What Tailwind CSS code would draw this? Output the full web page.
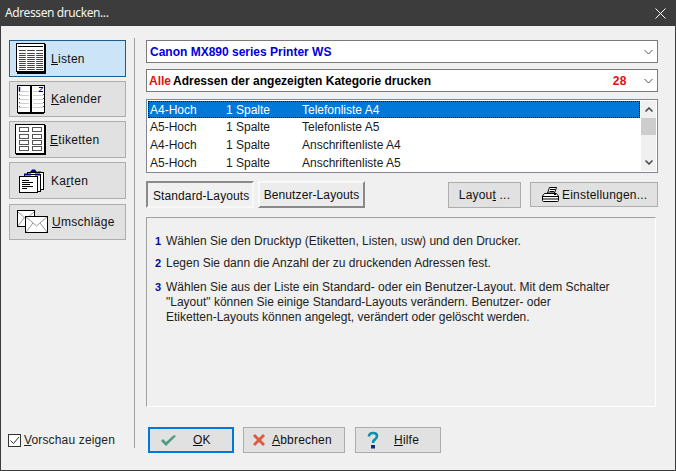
<!DOCTYPE html>
<html lang="de">
<head>
  <meta charset="UTF-8" />
  <title>Adressen drucken...</title>
  <script src="https://cdn.jsdelivr.net/npm/@tailwindcss/browser@4"></script>
</head>
<body class="w-[676px] h-[471px] overflow-hidden bg-[#f0f0f0] font-['Liberation_Sans',sans-serif] text-[12px] text-[#111]">
  <div class="w-[676px] h-[471px] flex flex-col border border-[#3c3c3c] border-t-0">
    <!-- title bar -->
    <div class="h-[26px] -mx-px bg-[#3c3c3c] text-[#f4f4f4] flex items-center justify-between pl-[5px] pr-[10px] font-['Noto_Sans',sans-serif] text-[12px] tracking-[-0.4px] shrink-0">
      <span>Adressen drucken...</span>
      <svg width="11" height="11" viewBox="0 0 11 11" fill="none" stroke="#fff" stroke-width="1"><path d="M0.5 0.5L10.5 10.5M10.5 0.5L0.5 10.5"/></svg>
    </div>

    <div class="flex flex-1 min-h-0">
      <!-- left column -->
      <div class="w-[133px] pl-[8px] pt-[14px] pb-[22px] flex flex-col shrink-0">
        <div class="flex flex-col text-[12px] tracking-[0.3px]">
          <button class="w-[117px] h-[37px] flex items-center border border-[#1b5e92] bg-[#cce4f7]">
            <svg class="ml-[6px] mr-[5px]" width="30" height="31" viewBox="0 0 30 31">
              <rect x="0.5" y="0.5" width="28" height="28" fill="#fff" stroke="#000"/>
              <rect x="1" y="29" width="29" height="2" fill="#000"/>
              <rect x="29" y="1" width="1" height="30" fill="#000"/>
              <path d="M2 3.500H27" stroke="#000"/>
              <path d="M3 7.500H27M3 10.500H27M3 12.500H27M3 14.500H27M3 16.500H27M3 18.500H27M3 20.500H27M3 22.500H27M3 24.500H27M3 26.500H27" stroke="#444"/>
              <path d="M10.500 7V27M19.500 7V27" stroke="#fff" stroke-width="1.400"/>
            </svg>
            <span><u>L</u>isten</span>
          </button>
          <button class="mt-[4px] w-[117px] h-[36px] flex items-center border border-[#adadad] bg-[#e1e1e1]">
            <svg class="ml-[6px] mr-[5px]" width="30" height="29" viewBox="0 0 30 29">
              <rect x="1.500" y="0.500" width="13" height="27" fill="#fff" stroke="#000"/>
              <rect x="15.500" y="0.500" width="13" height="27" fill="#fff" stroke="#000"/>
              <path d="M3 6.500H13M17 6.500H27M3 10.500H13M17 10.500H27M3 14.500H13M17 14.500H27M3 18.500H13M17 18.500H27M3 22.500H13M17 22.500H27" stroke="#cfcfcf"/>
              <path d="M3.500 9V24M27.500 9V24" stroke="#b0303a" stroke-dasharray="1 3"/>
              <path d="M3.500 2V6.500" stroke="#00008b" stroke-width="1.400"/>
              <path d="M23 2.500H27L23 6.500H27" stroke="#00008b" fill="none"/>
              <path d="M15 1V28" stroke="#000" stroke-width="2" stroke-dasharray="2 1"/>
              <path d="M2 28.500H28" stroke="#000"/>
            </svg>
            <span><u>K</u>alender</span>
          </button>
          <button class="mt-[4px] w-[117px] h-[37px] flex items-center border border-[#adadad] bg-[#e1e1e1]">
            <svg class="ml-[5px] mr-[4px]" width="31" height="31" viewBox="0 0 31 31">
              <rect x="0.500" y="0.500" width="29" height="29" fill="#fff" stroke="#000"/>
              <rect x="1" y="30" width="30" height="1" fill="#000"/>
              <path d="M30.500 1V31" stroke="#000"/>
              <g fill="#fff" stroke="#555"><rect x="4.500" y="3.500" width="9" height="4"/><rect x="17.500" y="3.500" width="9" height="4"/><rect x="4.500" y="10.500" width="9" height="4"/><rect x="17.500" y="10.500" width="9" height="4"/><rect x="4.500" y="16.500" width="9" height="4"/><rect x="17.500" y="16.500" width="9" height="4"/><rect x="4.500" y="22.500" width="9" height="4"/><rect x="17.500" y="22.500" width="9" height="4"/></g>
            </svg>
            <span><u>E</u>tiketten</span>
          </button>
          <button class="mt-[4px] w-[117px] h-[37px] flex items-center border border-[#adadad] bg-[#e1e1e1]">
            <svg class="ml-[9px] mr-[6px]" width="26" height="24" viewBox="0 0 26 24">
              <path d="M7 6L10 3H14L17 6ZM11 3L13 0.500H16L18 3ZM17 5L19 2.500H22L24 5Z" fill="#00007f"/>
              <rect x="8.500" y="3.500" width="16" height="17" fill="#fff" stroke="#000"/>
              <rect x="5.500" y="5.500" width="16" height="17" fill="#fff" stroke="#000"/>
              <path d="M5 5.500H12M16 5.500H21" stroke="#00007f" stroke-width="2"/>
              <rect x="0.500" y="7.500" width="18" height="16" fill="#fff" stroke="#000"/>
              <path d="M3 11.500H10M3 13.500H14M3 15.500H11M3 17.500H14M3 19.500H8" stroke="#000"/>
            </svg>
            <span>Ka<u>r</u>ten</span>
          </button>
          <button class="mt-[5px] w-[117px] h-[36px] flex items-center border border-[#adadad] bg-[#e1e1e1]">
            <svg class="ml-[6px] mr-[4px]" width="32" height="24" viewBox="0 0 32 24">
              <rect x="1.500" y="0.500" width="17" height="16" fill="#fff" stroke="#000"/>
              <path d="M2 2L10 9L18 2M2 16L8 8" fill="none" stroke="#999"/>
              <rect x="9.500" y="6.500" width="22" height="16" fill="#fff" stroke="#000"/>
              <path d="M10 7L20.500 16L31 7M10 22L17 13M31 22L24 13" fill="none" stroke="#999"/>
            </svg>
            <span><u>U</u>mschläge</span>
          </button>
        </div>
        <label class="mt-auto -ml-px flex items-center h-[16px] text-[12px] tracking-[0.15px] text-[#222]">
          <span class="w-[13px] h-[13px] mt-px border border-[#333] bg-white flex items-center justify-center shrink-0">
            <svg width="11" height="11" viewBox="0 0 11 11" fill="none" stroke="#333"><path d="M1.500 5.500L4.500 8.500L10 2"/></svg>
          </span>
          <span class="ml-[3px]"><u>V</u>orschau zeigen</span>
        </label>
      </div>

      <!-- divider -->
      <div class="w-px bg-[#a0a0a0] mt-[12px] mb-[22px] shrink-0"></div>

      <!-- right column -->
      <div class="w-[512px] ml-[11px] pt-[14px] flex flex-col">
        <div class="h-[23px] border border-[#7a7a7a] bg-white flex items-center justify-between pl-[3px] pr-[4px] font-bold text-[#0000d8] text-[12px]">
          <span>Canon MX890 series Printer WS</span>
          <svg width="9" height="6" viewBox="0 0 9 6" fill="none" stroke="#555"><path d="M0.500 1L4.500 5L8.500 1"/></svg>
        </div>
        <div class="mt-[6px] h-[23px] border border-[#7a7a7a] bg-white flex items-center pl-[2px] pr-[4px] font-bold text-[12px] text-black">
          <span class="text-[#e81010]">Alle</span>
          <span class="ml-[2px]">Adressen der angezeigten Kategorie drucken</span>
          <span class="ml-auto mr-[17px] text-[#e01010] text-[12px] tracking-[0.5px]">28</span>
          <svg width="9" height="6" viewBox="0 0 9 6" fill="none" stroke="#555"><path d="M0.500 1L4.500 5L8.500 1"/></svg>
        </div>

        <!-- list -->
        <div class="mt-[7px] h-[74px] border border-[#828790] bg-white p-px flex">
          <div class="flex-1 text-[#1a1a1a]">
            <div class="h-[17px] mb-px bg-[#0078d7] text-white outline-1 outline-dotted outline-offset-[-1px] outline-black flex items-center pl-[2px]">
              <span class="w-[76px]">A4-Hoch</span><span class="w-[76px]">1 Spalte</span><span>Telefonliste A4</span>
            </div>
            <div class="h-[18px] pb-[2px] flex items-center pl-[2px]">
              <span class="w-[76px]">A5-Hoch</span><span class="w-[76px]">1 Spalte</span><span>Telefonliste A5</span>
            </div>
            <div class="h-[18px] pb-[2px] flex items-center pl-[2px]">
              <span class="w-[76px]">A4-Hoch</span><span class="w-[76px]">1 Spalte</span><span>Anschriftenliste A4</span>
            </div>
            <div class="h-[18px] pb-[2px] flex items-center pl-[2px]">
              <span class="w-[76px]">A5-Hoch</span><span class="w-[76px]">1 Spalte</span><span>Anschriftenliste A5</span>
            </div>
          </div>
          <div class="w-[15px] ml-px bg-[#f0f0f0] flex flex-col">
            <div class="h-[17px] flex items-center justify-center"><svg width="8" height="5" viewBox="0 0 8 5" fill="none" stroke="#444" stroke-width="1.500"><path d="M0.500 4.500L4 1L7.500 4.500"/></svg></div>
            <div class="h-[17px] bg-[#cdcdcd]"></div>
            <div class="flex-1"></div>
            <div class="h-[17px] flex items-center justify-center"><svg width="8" height="5" viewBox="0 0 8 5" fill="none" stroke="#444" stroke-width="1.500"><path d="M0.500 0.500L4 4L7.500 0.500"/></svg></div>
          </div>
        </div>

        <!-- tabs + layout buttons -->
        <div class="mt-[8px] h-[27px] flex items-start">
          <div class="w-[108px] h-[27px] border-2 border-[#f8f8f8] border-t-[#8a8a8a] border-l-[#8a8a8a] bg-[#f0f0f0] flex items-center pl-[5px] pt-[2px] tracking-[0.1px]">Standard-Layouts</div>
          <div class="ml-[4px] w-[107px] h-[27px] border-2 border-[#8a8a8a] border-t-[#f8f8f8] border-l-[#f8f8f8] bg-[#ececec] flex items-center justify-center tracking-[0.1px]">Benutzer-Layouts</div>
          <button class="ml-[83px] mt-px w-[73px] h-[26px] border border-[#adadad] bg-[#e1e1e1] tracking-[0.2px]">Layou<u>t</u> ...</button>
          <button class="ml-[9px] mt-px w-[128px] h-[25px] border border-[#adadad] bg-[#e1e1e1] flex items-center pl-[11px] tracking-[0.2px]">
            <svg class="mr-[3px]" width="17" height="15" viewBox="0 0 17 15">
              <path d="M5.500 6L7.500 0.500H14.500L12.500 6Z" fill="#fff" stroke="#000"/>
              <path d="M8 2.500H13M7.500 4.500H12" stroke="#000"/>
              <path d="M2.500 6.500H14.500L16.500 9V13.500Q16.500 14.500 15.500 14.500H1.500Q0.500 14.500 0.500 13.500V9Z" fill="#fff" stroke="#000"/>
              <path d="M1 9.500H16M1 12H16" stroke="#000"/>
              <path d="M12 7.500H14" stroke="#000"/>
            </svg>
            <span>Einstellungen...</span>
          </button>
        </div>

        <!-- help panel -->
        <div class="mt-[9px] mr-[2px] h-[190px] border border-[#a0a0a0] border-r-white border-b-white px-[8px] pt-[16px] text-[#222]">
          <div class="flex h-[14px] items-center"><span class="w-[11px] font-bold text-[#0a0a9c] text-[11px]">1</span><span>Wählen Sie den Drucktyp (Etiketten, Listen, usw) und den Drucker.</span></div>
          <div class="mt-[8px] flex h-[14px] items-center"><span class="w-[11px] font-bold text-[#0a0a9c] text-[11px]">2</span><span>Legen Sie dann die Anzahl der zu druckenden Adressen fest.</span></div>
          <div class="mt-[10px] flex leading-[15px]"><span class="w-[11px] font-bold text-[#0a0a9c] text-[11px]">3</span><span>Wählen Sie aus der Liste ein Standard- oder ein Benutzer-Layout. Mit dem Schalter<br>"Layout" können Sie einige Standard-Layouts verändern. Benutzer- oder<br>Etiketten-Layouts können angelegt, verändert oder gelöscht werden.</span></div>
        </div>

        <!-- footer buttons -->
        <div class="mt-[20px] ml-[2px] flex tracking-[0.2px]">
          <button class="w-[86px] h-[26px] border-2 border-[#0078d7] bg-[#e1e1e1] flex items-center pl-[10px]">
            <svg width="17" height="13" viewBox="0 0 17 13"><path d="M1 7L6 12L16 2L14 1L6 8L3 5Z" fill="#4f9c80"/></svg>
            <span class="ml-[16px]"><u>O</u>K</span>
          </button>
          <button class="ml-[9px] w-[102px] h-[26px] border border-[#adadad] bg-[#e1e1e1] flex items-center pl-[8px]">
            <svg width="14" height="14" viewBox="0 0 14 14"><path d="M1 3L3 1L7 5L11 1L13 3L9 7L13 11L11 13L7 9L3 13L1 11L5 7Z" fill="#dc5a3e"/></svg>
            <span class="ml-[6px]"><u>A</u>bbrechen</span>
          </button>
          <button class="ml-[10px] w-[86px] h-[26px] border border-[#adadad] bg-[#e1e1e1] flex items-center pl-[10px]">
            <svg width="14" height="18" viewBox="0 0 14 18" fill="none"><path d="M3 5.500Q3 2 7 2Q11 2 11 5Q11 7 9 8.500Q7 9.500 7 12" stroke="#0b8fb0" stroke-width="2.600"/><rect x="5" y="14" width="4" height="3.500" fill="#0b2f80"/></svg>
            <span class="ml-[14px]"><u>H</u>ilfe</span>
          </button>
        </div>
      </div>
    </div>
  </div>
</body>
</html>
